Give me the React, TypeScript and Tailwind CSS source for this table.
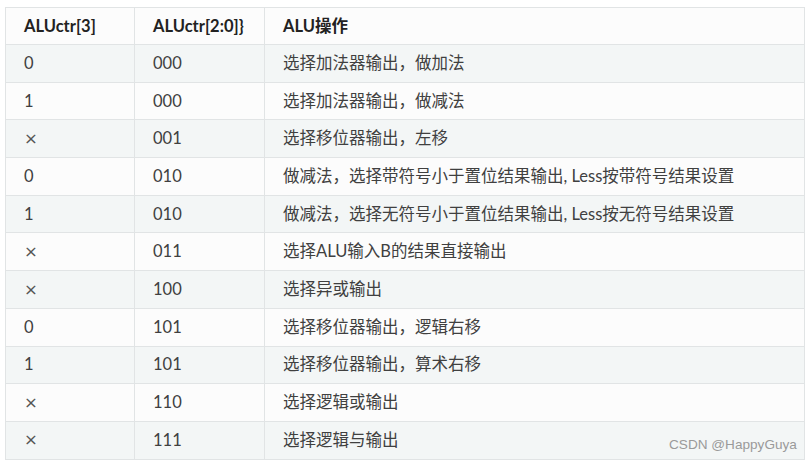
const rows: [string, string, string][] = [
  ['0', '000', '选择加法器输出，做加法'],
  ['1', '000', '选择加法器输出，做减法'],
  ['×', '001', '选择移位器输出，左移'],
  ['0', '010', '做减法，选择带符号小于置位结果输出, Less按带符号结果设置'],
  ['1', '010', '做减法，选择无符号小于置位结果输出, Less按无符号结果设置'],
  ['×', '011', '选择ALU输入B的结果直接输出'],
  ['×', '100', '选择异或输出'],
  ['0', '101', '选择移位器输出，逻辑右移'],
  ['1', '101', '选择移位器输出，算术右移'],
  ['×', '110', '选择逻辑或输出'],
  ['×', '111', '选择逻辑与输出'],
]

export default function App() {
  return (
    <div
      className="relative w-[811px] h-[461px] bg-white pl-[5px] pt-[7px] text-[16.5px] text-[#404040]"
      style={{ fontFamily: 'Lato, "Noto Sans CJK SC", sans-serif' }}
    >
      <table className="w-[800px] border-collapse table-fixed">
        <colgroup>
          <col className="w-[129px]" />
          <col className="w-[130px]" />
          <col />
        </colgroup>
        <thead>
          <tr className="h-[37px] bg-[#fcfcfc]">
            <th className="border border-[#e1e4e5] pl-[18px] text-left font-bold text-[#222]">ALUctr[3]</th>
            <th className="border border-[#e1e4e5] pl-[18px] text-left font-bold text-[#222]">{'ALUctr[2:0]}'}</th>
            <th className="border border-[#e1e4e5] pl-[18px] text-left font-bold text-[#222]">ALU操作</th>
          </tr>
        </thead>
        <tbody>
          {rows.map((r, i) => (
            <tr key={i} className={`h-[37.7px] ${i % 2 === 0 ? 'bg-[#f3f6f6]' : 'bg-[#fcfcfc]'}`}>
              <td className="border border-[#e1e4e5] pl-[18px]">
                {r[0] === '×' ? (
                  <span className="text-[#555]" style={{ fontFamily: '"DejaVu Sans", sans-serif' }}>×</span>
                ) : (
                  r[0]
                )}
              </td>
              <td className="border border-[#e1e4e5] pl-[18px]">{r[1]}</td>
              <td className="border border-[#e1e4e5] pl-[18px]">{r[2]}</td>
            </tr>
          ))}
        </tbody>
      </table>
      <div
        className="absolute left-[669px] top-[435px] text-[13.6px] text-[#9a9a9a]"
        style={{ fontFamily: '"Liberation Sans", Arial, sans-serif' }}
      >
        CSDN @HappyGuya
      </div>
    </div>
  )
}
